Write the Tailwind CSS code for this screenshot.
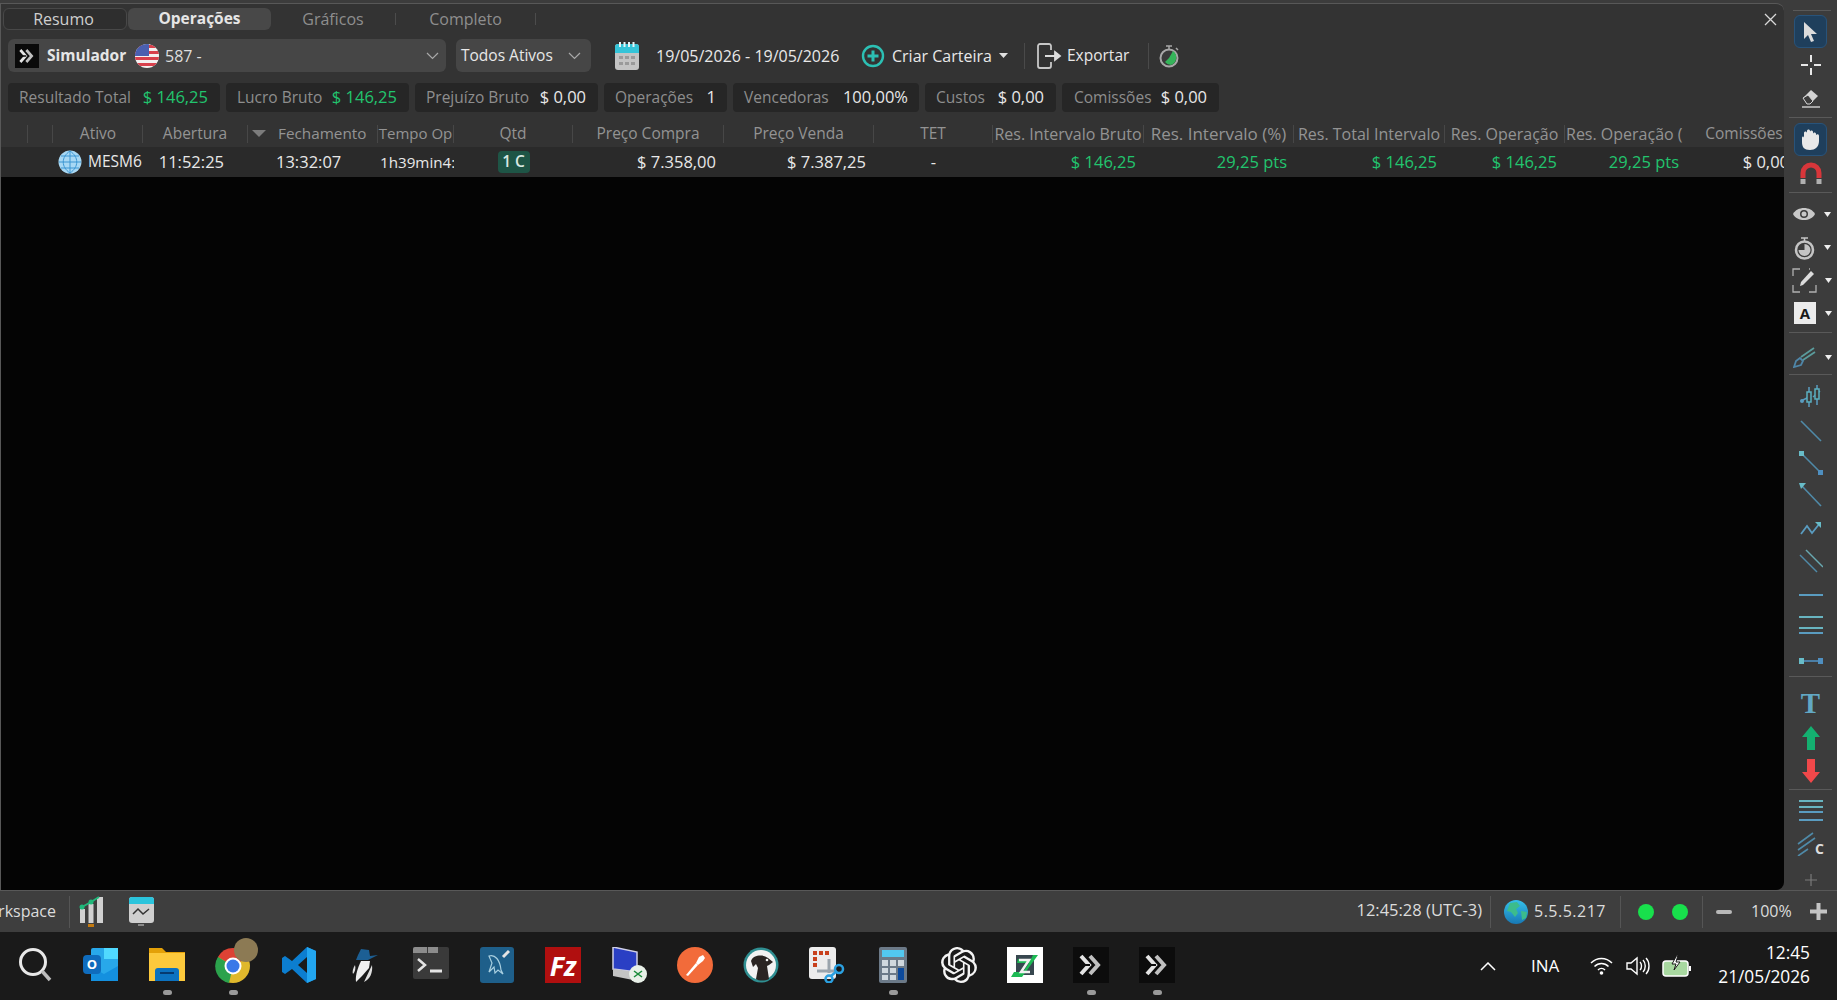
<!DOCTYPE html>
<html lang="pt-BR">
<head>
  <meta charset="UTF-8" />
  <title>Operações</title>
  <script src="https://cdn.jsdelivr.net/npm/@tailwindcss/browser@4"></script>
</head>
<body class="w-[1837px] h-[1000px] overflow-hidden bg-[#1a1a1a] font-['Open_Sans','Noto_Sans',sans-serif] text-[15.5px] text-[#e8e8e8]">

  <svg class="hidden">
    <symbol id="nelo" viewBox="0 0 36 36">
      <path d="M8 9l8 9-8 9" fill="none" stroke="#e4e4e4" stroke-width="4"/>
      <path d="M17 9l8 9-8 9" fill="none" stroke="#c0c0c0" stroke-width="4"/>
      <path d="M4 18h13" stroke="#0c0c0c" stroke-width="2"/>
    </symbol>
  </svg>

  <div class="flex h-[890px] bg-[#3c3c3c]">
    <!-- main panel -->
    <div class="w-[1784px] flex flex-col overflow-hidden mt-[3px] bg-[#333333] border-t border-l border-[#585858] rounded-tr-lg rounded-br-lg">

      <!-- tabs -->
      <div class="flex items-center h-[22px] mt-[4px] pl-[2px] text-[16px]">
        <div class="w-[124px] h-[22px] flex items-center justify-center pr-[3px] rounded-md bg-[#2e2e2e] border border-[#484848] text-[#cfcfcf]">Resumo</div>
        <div class="w-[143px] h-[22px] ml-[1px] flex items-center justify-center rounded-md bg-[#484848] font-bold text-[15.5px] text-[#e6e6e6]">Operações</div>
        <div class="w-[125px] h-[12px] flex items-center justify-center border-r border-[#4c4c4c] text-[#8e8e8e]">Gráficos</div>
        <div class="w-[140px] h-[12px] flex items-center justify-center border-r border-[#4c4c4c] text-[#8e8e8e]">Completo</div>
        <svg class="ml-auto mr-[7px]" width="13" height="13" viewBox="0 0 13 13"><path d="M1 1l11 11M12 1L1 12" stroke="#d8d8d8" stroke-width="1.300"/></svg>
      </div>

      <!-- toolbar -->
      <div class="flex items-center h-[33px] mt-[9px] pl-[7px] whitespace-nowrap">
        <div class="w-[438px] h-[33px] flex items-center rounded-md bg-[#464646]">
          <svg class="ml-[7px]" width="24" height="26" viewBox="0 0 36 36"><rect width="36" height="36" fill="#0a0a0a"/><use href="#nelo"/></svg>
          <span class="ml-[8px] w-[80px] font-bold text-[#e6e6e6]">Simulador</span>
          <svg class="ml-[8px]" width="24" height="24" viewBox="0 0 24 24">
            <defs><clipPath id="flagc"><circle cx="12" cy="12" r="12"/></clipPath></defs>
            <g clip-path="url(#flagc)">
              <rect width="24" height="24" fill="#f4f0f0"/>
              <path d="M0 1h24v3H0zM0 7h24v3H0zM0 13h24v3H0zM0 19h24v3H0z" fill="#d8404c"/>
              <rect width="14" height="12" fill="#4a5fb0"/>
            </g>
          </svg>
          <span class="ml-[6px] w-[40px] text-[16px] text-[#dedede]">587 -</span>
          <svg class="ml-[221px]" width="13" height="8" viewBox="0 0 13 8"><path d="M1 1l5.500 5.500L12 1" fill="none" stroke="#a8a8a8" stroke-width="1.200"/></svg>
        </div>
        <div class="w-[135px] h-[33px] ml-[10px] flex items-center rounded-md bg-[#464646] pl-[5px]">
          <span class="w-[100px] text-[#e8e8e8]">Todos Ativos</span>
          <svg class="ml-[7px]" width="13" height="8" viewBox="0 0 13 8"><path d="M1 1l5.500 5.500L12 1" fill="none" stroke="#a8a8a8" stroke-width="1.200"/></svg>
        </div>
        <svg class="ml-[24px]" width="24" height="28" viewBox="0 0 24 28">
          <rect x="0" y="2" width="24" height="26" rx="3" fill="#c4c4c4"/>
          <path d="M3 2h18a3 3 0 0 1 3 3v6H0V5a3 3 0 0 1 3-3z" fill="#35c4d8"/>
          <path d="M5 0v5M9.500 0v5M14 0v5M18.500 0v5" stroke="#e8f4f6" stroke-width="2"/>
          <path d="M4 14h4v3H4zM10 14h4v3h-4zM16 14h4v3h-4zM4 20h4v3H4zM10 20h4v3h-4zM16 20h4v3h-4z" fill="#9a9a9a"/>
        </svg>
        <span class="ml-[17px] w-[184px] text-[16px]">19/05/2026 - 19/05/2026</span>
        <svg class="ml-[21px]" width="24" height="24" viewBox="0 0 24 24"><circle cx="12" cy="12" r="10" fill="none" stroke="#2cc0b4" stroke-width="2.400"/><path d="M12 6.500v11M6.500 12h11" stroke="#2cc0b4" stroke-width="3"/></svg>
        <span class="ml-[7px] w-[100px] text-[16px]">Criar Carteira</span>
        <svg class="ml-[7px]" width="9" height="5" viewBox="0 0 9 5"><path d="M0 0h9L4.500 5z" fill="#e0e0e0"/></svg>
        <div class="ml-[16px] w-px h-[26px] bg-[#4a4a4a]"></div>
        <svg class="ml-[12px]" width="25" height="26" viewBox="0 0 25 26"><path d="M14 7V3a2 2 0 0 0-2-2H3a2 2 0 0 0-2 2v20a2 2 0 0 0 2 2h9a2 2 0 0 0 2-2v-4" fill="none" stroke="#c8c8c8" stroke-width="1.800"/><path d="M8 13h11M18 9l5 4-5 4z" fill="#dcdcdc" stroke="#dcdcdc" stroke-width="1.800"/></svg>
        <span class="ml-[5px] w-[64px]">Exportar</span>
        <div class="ml-[17px] w-px h-[26px] bg-[#4a4a4a]"></div>
        <svg class="ml-[10px]" width="21" height="24" viewBox="0 0 21 24"><circle cx="10" cy="14" r="8.500" fill="#3a3a3a" stroke="#a8a8a8" stroke-width="2"/><path d="M10 14l4-7a8 8 0 0 1-2 14 8 8 0 0 1-6-3z" fill="#35b45a"/><path d="M7 2h6M10 2v3M17 4l2 2" stroke="#a8a8a8" stroke-width="1.500"/></svg>
      </div>

      <!-- resumo chips -->
      <div class="flex gap-[6px] mt-[11px] pl-[7px] whitespace-nowrap">
        <div class="w-[212px] h-[29px] flex items-center justify-between pl-[11px] pr-[12px] rounded bg-[#262626]"><span class="text-[#8e8e8e]">Resultado Total</span><span class="text-[16.500px] text-[#22c46e]">$ 146,25</span></div>
        <div class="w-[183px] h-[29px] flex items-center justify-between pl-[11px] pr-[12px] rounded bg-[#262626]"><span class="text-[#8e8e8e]">Lucro Bruto</span><span class="text-[16.500px] text-[#22c46e]">$ 146,25</span></div>
        <div class="w-[183px] h-[29px] flex items-center justify-between pl-[11px] pr-[12px] rounded bg-[#262626]"><span class="text-[#8e8e8e]">Prejuízo Bruto</span><span class="text-[16.500px]">$ 0,00</span></div>
        <div class="w-[123px] h-[29px] flex items-center justify-between px-[11px] rounded bg-[#262626]"><span class="text-[#8e8e8e]">Operações</span><span class="text-[16.500px] font-medium">1</span></div>
        <div class="w-[186px] h-[29px] flex items-center justify-between px-[11px] rounded bg-[#262626]"><span class="text-[#8e8e8e]">Vencedoras</span><span class="text-[16.500px]">100,00%</span></div>
        <div class="w-[131px] h-[29px] flex items-center justify-between pl-[11px] pr-[12px] rounded bg-[#262626]"><span class="text-[#8e8e8e]">Custos</span><span class="text-[16.500px]">$ 0,00</span></div>
        <div class="w-[157px] h-[29px] flex items-center justify-between pl-[12px] pr-[12px] rounded bg-[#262626]"><span class="text-[#8e8e8e]">Comissões</span><span class="text-[16.500px]">$ 0,00</span></div>
      </div>

      <!-- table header -->
      <div class="grid grid-cols-[27px_25px_90px_105px_130px_76px_119px_151px_150px_119px_151px_150px_151px_120px_125px_112px] items-center h-[27px] mt-[8px] text-[#939393] whitespace-nowrap">
        <div class="h-[18px] border-r border-[#474747]"></div>
        <div class="h-[18px] border-r border-[#474747]"></div>
        <div class="h-[18px] flex items-center justify-center pl-[1px] border-r border-[#474747]">Ativo</div>
        <div class="h-[18px] flex items-center justify-center border-r border-[#474747]">Abertura</div>
        <div class="h-[18px] flex items-center border-r border-[#474747] pl-[4px]">
          <svg width="14" height="7" viewBox="0 0 14 7"><path d="M0 0h14L7 7z" fill="#7c7c7c"/></svg>
          <span class="ml-[12px] text-[15.300px]">Fechamento</span>
        </div>
        <div class="h-[18px] flex items-center justify-center border-r border-[#474747] text-[15px]">Tempo Op</div>
        <div class="h-[18px] flex items-center justify-center border-r border-[#474747]">Qtd</div>
        <div class="h-[18px] flex items-center justify-center border-r border-[#474747]">Preço Compra</div>
        <div class="h-[18px] flex items-center justify-center border-r border-[#474747]">Preço Venda</div>
        <div class="h-[18px] flex items-center justify-center border-r border-[#474747]">TET</div>
        <div class="h-[18px] flex items-center justify-center border-r border-[#474747] text-[16px]">Res. Intervalo Bruto</div>
        <div class="h-[18px] flex items-center justify-center border-r border-[#474747] text-[17px]">Res. Intervalo (%)</div>
        <div class="h-[18px] flex items-center justify-center border-r border-[#474747] text-[16px]">Res. Total Intervalo</div>
        <div class="h-[18px] flex items-center justify-center border-r border-[#474747] text-[16px]">Res. Operação</div>
        <div class="h-[18px] flex items-center pl-[1px] text-[16px]">Res. Operação (</div>
        <div class="h-[18px] flex items-center justify-center pr-[4px]">Comissões</div>
      </div>

      <!-- table row -->
      <div class="grid grid-cols-[27px_25px_90px_105px_130px_76px_119px_151px_150px_119px_151px_150px_151px_120px_125px_112px] items-center h-[30px] bg-[#2a2a2a] text-[16.500px] whitespace-nowrap">
        <div></div>
        <div class="col-span-2 flex items-center pl-[30px]">
          <svg width="24" height="24" viewBox="0 0 24 24"><circle cx="12" cy="12" r="11.500" fill="#a8d8f4"/><path d="M12 1v22M1 12h22M3 6h18M3 18h18M12 1c-9 6-9 16 0 22M12 1c9 6 9 16 0 22" fill="none" stroke="#3c96d2" stroke-width="1"/></svg>
          <span class="ml-[6px] text-[15.500px]">MESM6</span>
        </div>
        <div class="text-right pr-[24px]">11:52:25</div>
        <div class="pl-[28px]">13:32:07</div>
        <div class="pl-[2px] overflow-hidden text-[15.200px]">1h39min4:</div>
        <div class="flex justify-center"><span class="w-[32px] h-[22px] flex items-center justify-center rounded bg-[#1e5546] text-[15.500px] text-[#d8e8e2] font-semibold">1 C</span></div>
        <div class="text-right pr-[8px]">$ 7.358,00</div>
        <div class="text-right pr-[8px]">$ 7.387,25</div>
        <div class="text-center">-</div>
        <div class="text-right pr-[8px] text-[#22c46e]">$ 146,25</div>
        <div class="text-right pr-[7px] text-[#22c46e]">29,25 pts</div>
        <div class="text-right pr-[8px] text-[#22c46e]">$ 146,25</div>
        <div class="text-right pr-[8px] text-[#22c46e]">$ 146,25</div>
        <div class="text-right pr-[11px] text-[#22c46e]">29,25 pts</div>
        <div class="text-right pr-[13px]">$ 0,00</div>
      </div>

      <div class="flex-1 bg-[#040404]"></div>
    </div>

    <!-- right drawing toolbar -->
    <div class="w-[53px] flex flex-col pt-[10px] items-center">
      <div class="w-[38px] h-px bg-[#595959] ml-[2px]"></div>
      <div class="w-[33px] h-[33px] mt-[4px] flex items-center justify-center rounded-md bg-[#1f3f5c] border border-[#28537a]">
        <svg width="15" height="22" viewBox="0 0 15 22"><path d="M1 1v17l4-4 3 7 3-1-3-7h6z" fill="#dcdcdc"/></svg>
      </div>
      <div class="h-[34px] flex items-center"><svg width="20" height="20" viewBox="0 0 20 20"><path d="M10 0v7M10 13v7M0 10h7M13 10h7" stroke="#e8e8e8" stroke-width="2"/></svg></div>
      <div class="h-[32px] flex items-center"><svg width="20" height="20" viewBox="0 0 20 20"><path d="M2 10l8-8 7 6-8 8H6z" fill="#d4d4d4"/><path d="M2 10l4 6h3l3-3-5-6z" fill="#3c3c3c" stroke="#d4d4d4"/><path d="M1 19h18" stroke="#c8c8c8" stroke-width="1.500"/></svg></div>
      <div class="w-[43px] h-px mt-[3px] bg-[#595959]"></div>
      <div class="w-[33px] h-[33px] mt-[5px] flex items-center justify-center rounded-md bg-[#1f3f5c] border border-[#28537a]">
        <svg width="21" height="23" viewBox="0 0 21 23"><path d="M2 10c0-2 2-2 2 0V5c0-2 3-2 3 0V3c0-2 3-2 3 0v1c0-2 3-2 3 0v2c0-2 3-2 3 0v1c1-1 3-1 3 1v5c0 6-4 9-9 9-6 0-8-3-8-8z" fill="#e8e8e8"/></svg>
      </div>
      <div class="h-[33px] flex items-center"><svg width="22" height="22" viewBox="0 0 22 22"><path d="M3 16V11a8 8 0 0 1 16 0v5" fill="none" stroke="#d8363a" stroke-width="5"/><path d="M.5 17h5v5h-5zM16.500 17h5v5h-5z" fill="#b0b0b0"/></svg></div>
      <div class="w-[43px] h-px mt-[3px] bg-[#595959]"></div>

      <div class="w-[53px] h-[34px] mt-[4px] flex items-center pl-[9px]">
        <svg width="22" height="14" viewBox="0 0 22 14"><path d="M0 7c4-8 18-8 22 0-4 8-18 8-22 0z" fill="#c8c8c8"/><circle cx="11" cy="7" r="4" fill="#3c3c3c"/><circle cx="11" cy="7" r="2.500" fill="#c8c8c8"/></svg>
        <svg class="ml-[9px]" width="7" height="5" viewBox="0 0 7 5"><path d="M0 0h7L3.500 5z" fill="#eee"/></svg>
      </div>
      <div class="w-[53px] h-[33px] flex items-center pl-[10px]">
        <svg width="21" height="24" viewBox="0 0 21 24"><circle cx="10.500" cy="14" r="8.500" fill="#3c3c3c" stroke="#c4c4c4" stroke-width="2.500"/><path d="M10.500 14V8a6 6 0 1 1-6 6z" fill="#c4c4c4"/><path d="M7 2h7M10.500 2v3" stroke="#c4c4c4" stroke-width="1.500"/></svg>
        <svg class="ml-[9px]" width="7" height="5" viewBox="0 0 7 5"><path d="M0 0h7L3.500 5z" fill="#eee"/></svg>
      </div>
      <div class="w-[53px] h-[33px] flex items-center pl-[8px]">
        <svg width="25" height="25" viewBox="0 0 25 25"><path d="M1 8V1h7M1 17v7h7M24 17v7h-7M17 1h1" fill="none" stroke="#b0b0b0" stroke-width="1.300"/><path d="M8 18l1-4L19 3l3 3-11 11z" fill="#dcdcdc"/></svg>
        <svg class="ml-[8px]" width="7" height="5" viewBox="0 0 7 5"><path d="M0 0h7L3.500 5z" fill="#eee"/></svg>
      </div>
      <div class="w-[53px] h-[32px] flex items-center pl-[10px]">
        <span class="w-[22px] h-[22px] flex items-center justify-center bg-[#ececec] text-[#1a1a1a] font-bold text-[15px] leading-none">A</span>
        <svg class="ml-[9px]" width="7" height="5" viewBox="0 0 7 5"><path d="M0 0h7L3.500 5z" fill="#eee"/></svg>
      </div>
      <div class="w-[43px] h-px mt-[3px] bg-[#595959]"></div>
      <div class="w-[53px] h-[34px] mt-[7px] flex items-center pl-[9px]">
        <svg width="23" height="21" viewBox="0 0 23 21"><path d="M1 20l2-6 4-3 3 3-2 4z" fill="none" stroke="#4f86a8" stroke-width="1.800"/><path d="M8 10L21 1M10 13L22 5" stroke="#5a9c9c" stroke-width="1.800"/></svg>
        <svg class="ml-[9px]" width="7" height="5" viewBox="0 0 7 5"><path d="M0 0h7L3.500 5z" fill="#eee"/></svg>
      </div>
      <div class="w-[43px] h-px bg-[#595959]"></div>
      <div class="h-[36px] mt-[4px] flex items-center"><svg width="22" height="24" viewBox="0 0 22 24"><path d="M1 16l8-4M9 2v20M17 0v20M20 6L13 12" stroke="#5a9cc0" stroke-width="1.500"/><rect x="7" y="7" width="4" height="10" fill="#3c3c3c" stroke="#5ab0c0" stroke-width="1.500"/><rect x="15" y="4" width="4" height="10" fill="#3c3c3c" stroke="#5ab0c0" stroke-width="1.500"/><circle cx="2" cy="16" r="2" fill="#5a9cc0"/></svg></div>
      <div class="h-[31px] flex items-center"><svg width="22" height="22" viewBox="0 0 22 22"><path d="M1 1l20 20" stroke="#4f8aa8" stroke-width="1.600"/></svg></div>
      <div class="h-[33px] flex items-center"><svg width="24" height="24" viewBox="0 0 24 24"><path d="M3 3l18 18" stroke="#4f8aa8" stroke-width="1.600"/><rect x="0" y="0" width="5" height="5" fill="#68bcc8"/><rect x="19" y="19" width="5" height="5" fill="#4f8fc0"/></svg></div>
      <div class="h-[32px] flex items-center"><svg width="23" height="24" viewBox="0 0 23 24"><path d="M2 2l20 21" stroke="#4f8aa8" stroke-width="1.600"/><path d="M0 0h7L2 6z" fill="#68bcc8"/></svg></div>
      <div class="h-[33px] flex items-center"><svg width="22" height="14" viewBox="0 0 22 14"><path d="M1 13l6-8 5 7 8-10" fill="none" stroke="#5a9cc0" stroke-width="1.800"/><path d="M15 1h6v6z" fill="#68bcc8"/></svg></div>
      <div class="h-[34px] flex items-center"><svg width="24" height="24" viewBox="0 0 24 24"><path d="M7 1l17 17" stroke="#68a8b0" stroke-width="1.500"/><path d="M1 6l17 17" stroke="#4f8aa8" stroke-width="1.500"/></svg></div>
      <div class="h-[33px] flex items-center"><div class="w-[24px] h-[2px] bg-[#5a9cc0]"></div></div>
      <div class="h-[22px] flex flex-col justify-center gap-[9px] mt-[3px]">
        <div class="w-[24px] h-[2px] bg-[#68b4c0]"></div>
        <div class="w-[24px] flex flex-col gap-[3px]"><div class="h-[2px] bg-[#68b4c0]"></div><div class="h-[2px] bg-[#5a9cc0]"></div></div>
      </div>
      <div class="h-[22px] mt-[14px] flex items-center"><svg width="24" height="8" viewBox="0 0 24 8"><path d="M3 4h18" stroke="#4f8fc0" stroke-width="1.600"/><rect width="5" height="6" y="1" fill="#68bcc8"/><rect x="19" width="5" height="6" y="1" fill="#4f8fc0"/></svg></div>
      <div class="w-[43px] h-px mt-[4px] bg-[#595959]"></div>
      <div class="h-[36px] mt-[8px] flex items-center font-['Liberation_Serif',serif] font-bold text-[29px] leading-none text-[#62a8c4]">T</div>
      <div class="h-[34px] flex items-center"><svg width="18" height="24" viewBox="0 0 18 24"><path d="M9 0l9 11h-5v13H5V11H0z" fill="#14b070"/></svg></div>
      <div class="h-[32px] flex items-center"><svg width="18" height="24" viewBox="0 0 18 24"><path d="M9 24L0 13h5V0h8v13h5z" fill="#f0484a"/></svg></div>
      <div class="w-[43px] h-px mt-[2px] bg-[#595959]"></div>
      <div class="mt-[10px] w-[24px] flex flex-col gap-[3.500px]">
        <div class="h-[2px] bg-[#68b4c0]"></div><div class="h-[2px] bg-[#68b4c0]"></div><div class="h-[2px] bg-[#5a9cc0]"></div><div class="h-[2px] bg-[#5a9cc0] mt-[2px]"></div>
      </div>
      <div class="mt-[11px] flex items-end">
        <svg width="20" height="24" viewBox="0 0 20 24"><path d="M1 12L16 1M1 18L18 6M1 24l10-7" stroke="#4f8aa8" stroke-width="1.600"/></svg>
        <span class="font-bold text-[14px] leading-none text-[#dcdcdc] -ml-[2px]">C</span>
      </div>
      <div class="mt-[18px]"><svg width="12" height="12" viewBox="0 0 12 12"><path d="M6 0v12M0 6h12" stroke="#7a7a7a" stroke-width="1.200"/></svg></div>
    </div>
  </div>

  <!-- status bar -->
  <div class="flex items-center h-[42px] bg-[#3e3e3e] border-t border-[#585858] text-[#dcdcdc] text-[16px] whitespace-nowrap">
    <div class="w-[56px] flex justify-end overflow-hidden -mt-[2px]"><span>Workspace</span></div>
    <div class="ml-[13px] w-px h-[32px] bg-[#555]"></div>
    <svg class="ml-[9px]" width="25" height="32" viewBox="0 0 25 32">
      <path d="M1 13h5v14H1zM9.500 8h5v19h-5zM18 1h6v26h-6z" fill="#d0d0d0"/>
      <path d="M3 11l9-5 8-5" fill="none" stroke="#1fb87a" stroke-width="2"/><circle cx="3" cy="11" r="2.500" fill="#1fb87a"/><circle cx="12" cy="6" r="2.500" fill="#1fb87a"/>
      <rect x="9" y="28" width="6" height="3" fill="#c47a10"/>
    </svg>
    <svg class="ml-[25px]" width="25" height="32" viewBox="0 0 25 32">
      <rect y="1" width="25" height="26" rx="3" fill="#cfcfcf"/><path d="M3 1h19a3 3 0 0 1 3 3v4H0V4a3 3 0 0 1 3-3z" fill="#2bc4dc"/>
      <path d="M4 18l5-5 5 5 6-5" fill="none" stroke="#333" stroke-width="1.500"/><rect x="9" y="28" width="6" height="2" fill="#888"/>
    </svg>
    <div class="ml-auto flex items-center pr-[10px]">
      <span class="text-[16.500px] -mt-[2px]">12:45:28 (UTC-3)</span>
      <div class="ml-[8px] w-px h-[32px] bg-[#555]"></div>
      <svg class="ml-[13px]" width="24" height="24" viewBox="0 0 24 24">
        <defs><linearGradient id="gl" x1="0" y1="0" x2="0" y2="1"><stop offset="0" stop-color="#35c0ea"/><stop offset="1" stop-color="#1878b4"/></linearGradient></defs>
        <circle cx="12" cy="12" r="12" fill="url(#gl)"/><path d="M6 3l7-1 3 4-4 3 2 4-3 4-4-5-4-1zM17 11l6 1-1 6-4 2z" fill="#3cbc8c"/>
      </svg>
      <span class="ml-[6px] w-[72px] tracking-[0.5px] -mt-[2px]">5.5.5.217</span>
      <div class="ml-[14px] w-px h-[32px] bg-[#555]"></div>
      <span class="ml-[17px] w-[16px] h-[16px] rounded-full bg-[#18e04c]"></span>
      <span class="ml-[18px] w-[16px] h-[16px] rounded-full bg-[#18e04c]"></span>
      <div class="ml-[14px] w-px h-[32px] bg-[#555]"></div>
      <div class="ml-[13px] w-[16px] h-[4px] rounded-sm bg-[#b8b8b8]"></div>
      <span class="ml-[19px] w-[42px] -mt-[2px]">100%</span>
      <svg class="ml-[17px]" width="17" height="17" viewBox="0 0 17 17"><path d="M8.500 0v17M0 8.500h17" stroke="#c4c4c4" stroke-width="4"/></svg>
    </div>
  </div>

  <!-- windows taskbar -->
  <div class="relative flex items-start h-[68px] pl-[2px] bg-[#1a1a1a]">
    <div class="w-[66px] h-[68px] flex flex-col items-center pt-[15px]">
      <svg width="34" height="36" viewBox="0 0 34 36"><circle cx="15" cy="15" r="12.500" fill="none" stroke="#e8e8e8" stroke-width="3"/><path d="M24 24l8 9" stroke="#bdbdbd" stroke-width="3.500"/></svg>
    </div>
    <div class="w-[66px] h-[68px] flex flex-col items-center pt-[15px]">
      <div class="relative w-[36px] h-[36px]">
        <svg width="36" height="36" viewBox="0 0 36 36"><rect x="8" y="1" width="27" height="33" rx="2" fill="#28a8ea"/><path d="M21 1h14v11H21z" fill="#50d9ff"/><path d="M8 20l13 7 14-8v15H8z" fill="#1490df"/></svg>
        <span class="absolute left-0 top-[8px] w-[18px] h-[19px] flex items-center justify-center rounded-sm bg-[#0f6cbd] text-white text-[13px] font-bold leading-none">O</span>
      </div>
    </div>
    <div class="w-[66px] h-[68px] flex flex-col items-center pt-[15px]">
      <svg width="36" height="36" viewBox="0 0 36 36"><path d="M0 1h13l4 4h19v29H0z" fill="#e3a008"/><rect y="6" width="36" height="28" fill="#fcc93c"/><path d="M6 34V24a3 3 0 0 1 3-3h18a3 3 0 0 1 3 3v10z" fill="#0c72c0"/><rect x="11" y="25" width="14" height="2" fill="#063a70"/></svg>
      <span class="w-[9px] h-[5px] mt-[7px] rounded-full bg-[#9a9a9a]"></span>
    </div>
    <div class="w-[66px] h-[68px] flex flex-col items-center pt-[15px]">
      <div class="relative w-[36px] h-[36px]">
        <svg width="36" height="36" viewBox="0 0 36 36"><circle cx="18" cy="19" r="17" fill="#e0b82c"/><path d="M18 19L3 10A17 17 0 0 1 33 10z" fill="#dd4234"/><path d="M18 19L3 10A17 17 0 0 0 14 36z" fill="#2ba24c"/><circle cx="18" cy="19" r="8.500" fill="#fff"/><circle cx="18" cy="19" r="6.500" fill="#3b78e8"/></svg>
        <span class="absolute -right-[7px] -top-[9px] w-[24px] h-[24px] rounded-full bg-[#8c7a54]"></span>
      </div>
      <span class="w-[9px] h-[5px] mt-[7px] rounded-full bg-[#9a9a9a]"></span>
    </div>
    <div class="w-[66px] h-[68px] flex flex-col items-center pt-[15px]">
      <svg width="36" height="36" viewBox="0 0 36 36"><path d="M26 0l9 4v28l-9 4-15-14-7 5-3-2V11l3-2 7 5z" fill="#0c7ed0"/><path d="M26 0l9 4v28l-9 4z" fill="#22a6f0"/><path d="M26 10l-9 8 9 8z" fill="#1a1a1a"/></svg>
    </div>
    <div class="w-[66px] h-[68px] flex flex-col items-center pt-[15px]">
      <svg width="30" height="36" viewBox="0 0 30 36"><path d="M8 8l3-6 8 1 1 6 8-1-10 5H6z" fill="#1c5f94"/><path d="M11 14h9l-1 7-7 8-6 6c-1-6 2-15 5-21z" fill="#f0f0f0"/><path d="M5 18c-2 3-3 7-2 9 2-2 3-6 2-9zM22 18l-8 17c6-3 9-9 8-17z" fill="#e0e0e0"/></svg>
    </div>
    <div class="w-[66px] h-[68px] flex flex-col items-center pt-[15px]">
      <svg width="36" height="32" viewBox="0 0 36 32"><rect width="36" height="32" rx="2" fill="#3a3a3a"/><path d="M0 2a2 2 0 0 1 2-2h12v6H0zM15 0h10v6H15z" fill="#8c8c8c"/><path d="M5 12l7 6-7 6" fill="none" stroke="#e4e4e4" stroke-width="2.500"/><path d="M17 24h12" stroke="#e4e4e4" stroke-width="3"/></svg>
    </div>
    <div class="w-[66px] h-[68px] flex flex-col items-center pt-[15px]">
      <svg width="34" height="36" viewBox="0 0 34 36"><rect width="34" height="36" rx="3" fill="#1e5f8a"/><path d="M9 9c6-2 11 4 12 14l2 4-5-4-3 3-1-6-5 5 3-9z" fill="none" stroke="#a8cfe0" stroke-width="1.200"/><path d="M23 10l6-6" stroke="#e4e4e4" stroke-width="3"/></svg>
    </div>
    <div class="w-[66px] h-[68px] flex flex-col items-center pt-[15px]">
      <span class="w-[36px] h-[36px] flex items-center justify-center bg-[#b00f0f] text-white text-[27px] font-bold italic leading-none">Fz</span>
    </div>
    <div class="w-[66px] h-[68px] flex flex-col items-center pt-[15px]">
      <svg width="36" height="36" viewBox="0 0 36 36"><path d="M2 0l24 5v20L2 22z" fill="#2a3fc4" stroke="#d0d0e8" stroke-width="1.500"/><path d="M2 22l24 3 4 6-8 2-20-4z" fill="#c4c4c4"/><circle cx="27" cy="27" r="9" fill="#e8f0e8"/><path d="M23 24l4 3-4 3M31 24l-4 3 4 3" fill="none" stroke="#1c8c3c" stroke-width="1.500"/></svg>
    </div>
    <div class="w-[66px] h-[68px] flex flex-col items-center pt-[15px]">
      <svg width="36" height="36" viewBox="0 0 36 36"><circle cx="18" cy="18" r="18" fill="#f26b3a"/><path d="M9 28l10-12 2 2-10 11z" fill="#fff"/><path d="M19 16l3-6 4-2 2 3-2 3-5 4z" fill="#fff"/></svg>
    </div>
    <div class="w-[66px] h-[68px] flex flex-col items-center pt-[15px]">
      <svg width="36" height="36" viewBox="0 0 36 36"><circle cx="18" cy="18" r="17.500" fill="#2f8f92"/><circle cx="18" cy="18" r="15" fill="#f2f2f2"/><path d="M8 14c2-6 12-7 17-3l5 4-4 3-2 1 2 13c-4 2-10 2-13 0l2-11-2-4-3 3z" fill="#2a2422"/><circle cx="24" cy="13" r="1.300" fill="#f2f2f2"/></svg>
    </div>
    <div class="w-[66px] h-[68px] flex flex-col items-center pt-[15px]">
      <svg width="36" height="36" viewBox="0 0 36 36"><rect width="27" height="32" rx="3" fill="#ececec"/><path d="M4 4h4v4H4zM10 4h4v4h-4zM16 4h4v4h-4zM4 10h4v4H4zM4 16h4v4H4z" fill="#c8401c"/><path d="M20 12v14M8 24h18" stroke="#9aa4ac" stroke-width="3"/><circle cx="30" cy="22" r="4" fill="none" stroke="#2ba0e0" stroke-width="2.500"/><circle cx="20" cy="32" r="3.500" fill="none" stroke="#2ba0e0" stroke-width="2.500"/><path d="M22 29l6-5" stroke="#2ba0e0" stroke-width="2.500"/></svg>
    </div>
    <div class="w-[66px] h-[68px] flex flex-col items-center pt-[15px]">
      <svg width="28" height="36" viewBox="0 0 28 36"><rect width="28" height="36" rx="2" fill="#6c7a88"/><rect x="3" y="3" width="22" height="7" fill="#52c8f0"/><path d="M3 13h6v6H3zM11 13h6v6h-6zM19 13h6v6h-6zM3 21h6v5H3zM11 21h6v5h-6zM3 28h6v5H3zM11 28h6v5h-6z" fill="#d0d8de"/><rect x="19" y="21" width="6" height="12" fill="#0c4a9c"/></svg>
      <span class="w-[9px] h-[5px] mt-[7px] rounded-full bg-[#9a9a9a]"></span>
    </div>
    <div class="w-[66px] h-[68px] flex flex-col items-center pt-[15px]">
      <svg width="36" height="36" viewBox="0 0 24 24"><path fill="#f4f4f4" d="M22.2819 9.8211a5.9847 5.9847 0 0 0-.5157-4.9108 6.0462 6.0462 0 0 0-6.5098-2.9A6.0651 6.0651 0 0 0 4.9807 4.1818a5.9847 5.9847 0 0 0-3.9977 2.9 6.0462 6.0462 0 0 0 .7427 7.0966 5.98 5.98 0 0 0 .511 4.9107 6.051 6.051 0 0 0 6.5146 2.9001A5.9847 5.9847 0 0 0 13.2599 24a6.0557 6.0557 0 0 0 5.7718-4.2058 5.9894 5.9894 0 0 0 3.9977-2.9001 6.0557 6.0557 0 0 0-.7475-7.0729zm-9.022 12.6081a4.4755 4.4755 0 0 1-2.8764-1.0408l.1419-.0804 4.7783-2.7582a.7948.7948 0 0 0 .3927-.6813v-6.7369l2.02 1.1686a.071.071 0 0 1 .038.052v5.5826a4.504 4.504 0 0 1-4.4945 4.4944zm-9.6607-4.1254a4.4708 4.4708 0 0 1-.5346-3.0137l.142.0852 4.783 2.7582a.7712.7712 0 0 0 .7806 0l5.8428-3.3685v2.3324a.0804.0804 0 0 1-.0332.0615L9.74 19.9502a4.4992 4.4992 0 0 1-6.1408-1.6464zM2.3408 7.8956a4.485 4.485 0 0 1 2.3655-1.9728V11.6a.7664.7664 0 0 0 .3879.6765l5.8144 3.3543-2.0201 1.1685a.0757.0757 0 0 1-.071 0l-4.8303-2.7865A4.504 4.504 0 0 1 2.3408 7.872zm16.5963 3.8558L13.1038 8.364 15.1192 7.2a.0757.0757 0 0 1 .071 0l4.8303 2.7913a4.4944 4.4944 0 0 1-.6765 8.1042v-5.6772a.79.79 0 0 0-.407-.667zm2.0107-3.0231l-.142-.0852-4.7735-2.7818a.7759.7759 0 0 0-.7854 0L9.409 9.2297V6.8974a.0662.0662 0 0 1 .0284-.0615l4.8303-2.7866a4.4992 4.4992 0 0 1 6.6802 4.66zM8.3065 12.863l-2.02-1.1638a.0804.0804 0 0 1-.038-.0567V6.0742a4.4992 4.4992 0 0 1 7.3757-3.4537l-.142.0805L8.704 5.459a.7948.7948 0 0 0-.3927.6813zm1.0976-2.3654l2.602-1.4998 2.6069 1.4998v2.9994l-2.5974 1.4997-2.6067-1.4997Z"/></svg>
    </div>
    <div class="w-[66px] h-[68px] flex flex-col items-center pt-[15px]">
      <svg width="36" height="36" viewBox="0 0 36 36"><rect width="36" height="36" fill="#fff"/><path d="M9 8h18v20H9z" fill="#37474f"/><path d="M11 12h13l2-4h5l-16 22H4l3-5h9l6-9H10z" fill="#1db954"/><path d="M12 13h10l-8 12h9" fill="none" stroke="#f2f2f2" stroke-width="2.500"/></svg>
    </div>
    <div class="w-[66px] h-[68px] flex flex-col items-center pt-[15px]">
      <svg width="36" height="36" viewBox="0 0 36 36"><rect width="36" height="36" fill="#0c0c0c"/><use href="#nelo"/></svg>
      <span class="w-[9px] h-[5px] mt-[7px] rounded-full bg-[#9a9a9a]"></span>
    </div>
    <div class="w-[66px] h-[68px] flex flex-col items-center pt-[15px]">
      <svg width="36" height="36" viewBox="0 0 36 36"><rect width="36" height="36" fill="#0c0c0c"/><use href="#nelo"/></svg>
      <span class="w-[9px] h-[5px] mt-[7px] rounded-full bg-[#9a9a9a]"></span>
    </div>

    <!-- tray -->
    <div class="ml-auto h-[68px] flex items-center pr-[27px] text-white">
      <svg width="16" height="9" viewBox="0 0 16 9"><path d="M1 8l7-7 7 7" fill="none" stroke="#fff" stroke-width="1.500"/></svg>
      <span class="ml-[35px] w-[30px] text-[17px]">INA</span>
      <svg class="ml-[29px]" width="23" height="18" viewBox="0 0 23 18"><path d="M1 6c6-6 15-6 21 0M4.500 9.500c4-4 10-4 14 0M8 13c2-2 5-2 7 0" fill="none" stroke="#fff" stroke-width="1.500"/><circle cx="11.500" cy="16" r="1.800" fill="#fff"/></svg>
      <svg class="ml-[13px]" width="24" height="20" viewBox="0 0 24 20"><path d="M1 7h4l6-5v16l-6-5H1z" fill="none" stroke="#fff" stroke-width="1.400"/><path d="M14 6c2 2 2 6 0 8M17 4c3 3 3 9 0 12M20 2c4 4 4 12 0 16" fill="none" stroke="#fff" stroke-width="1.400"/></svg>
      <svg class="ml-[12px]" width="30" height="22" viewBox="0 0 30 22"><rect x="1" y="6" width="25" height="15" rx="3" fill="#a8d8a0" stroke="#fff" stroke-width="1.500"/><path d="M28 11v5" stroke="#fff" stroke-width="2"/><path d="M15 0l-5 9h4l-2 6 6-8h-4l2-7z" fill="#fff" stroke="#1a1a1a"/></svg>
      <div class="ml-[18px] w-[100px] text-right text-[17.300px] leading-[24px] -mt-[2px]">
        <div>12:45</div>
        <div>21/05/2026</div>
      </div>
    </div>
  </div>
</body>
</html>
